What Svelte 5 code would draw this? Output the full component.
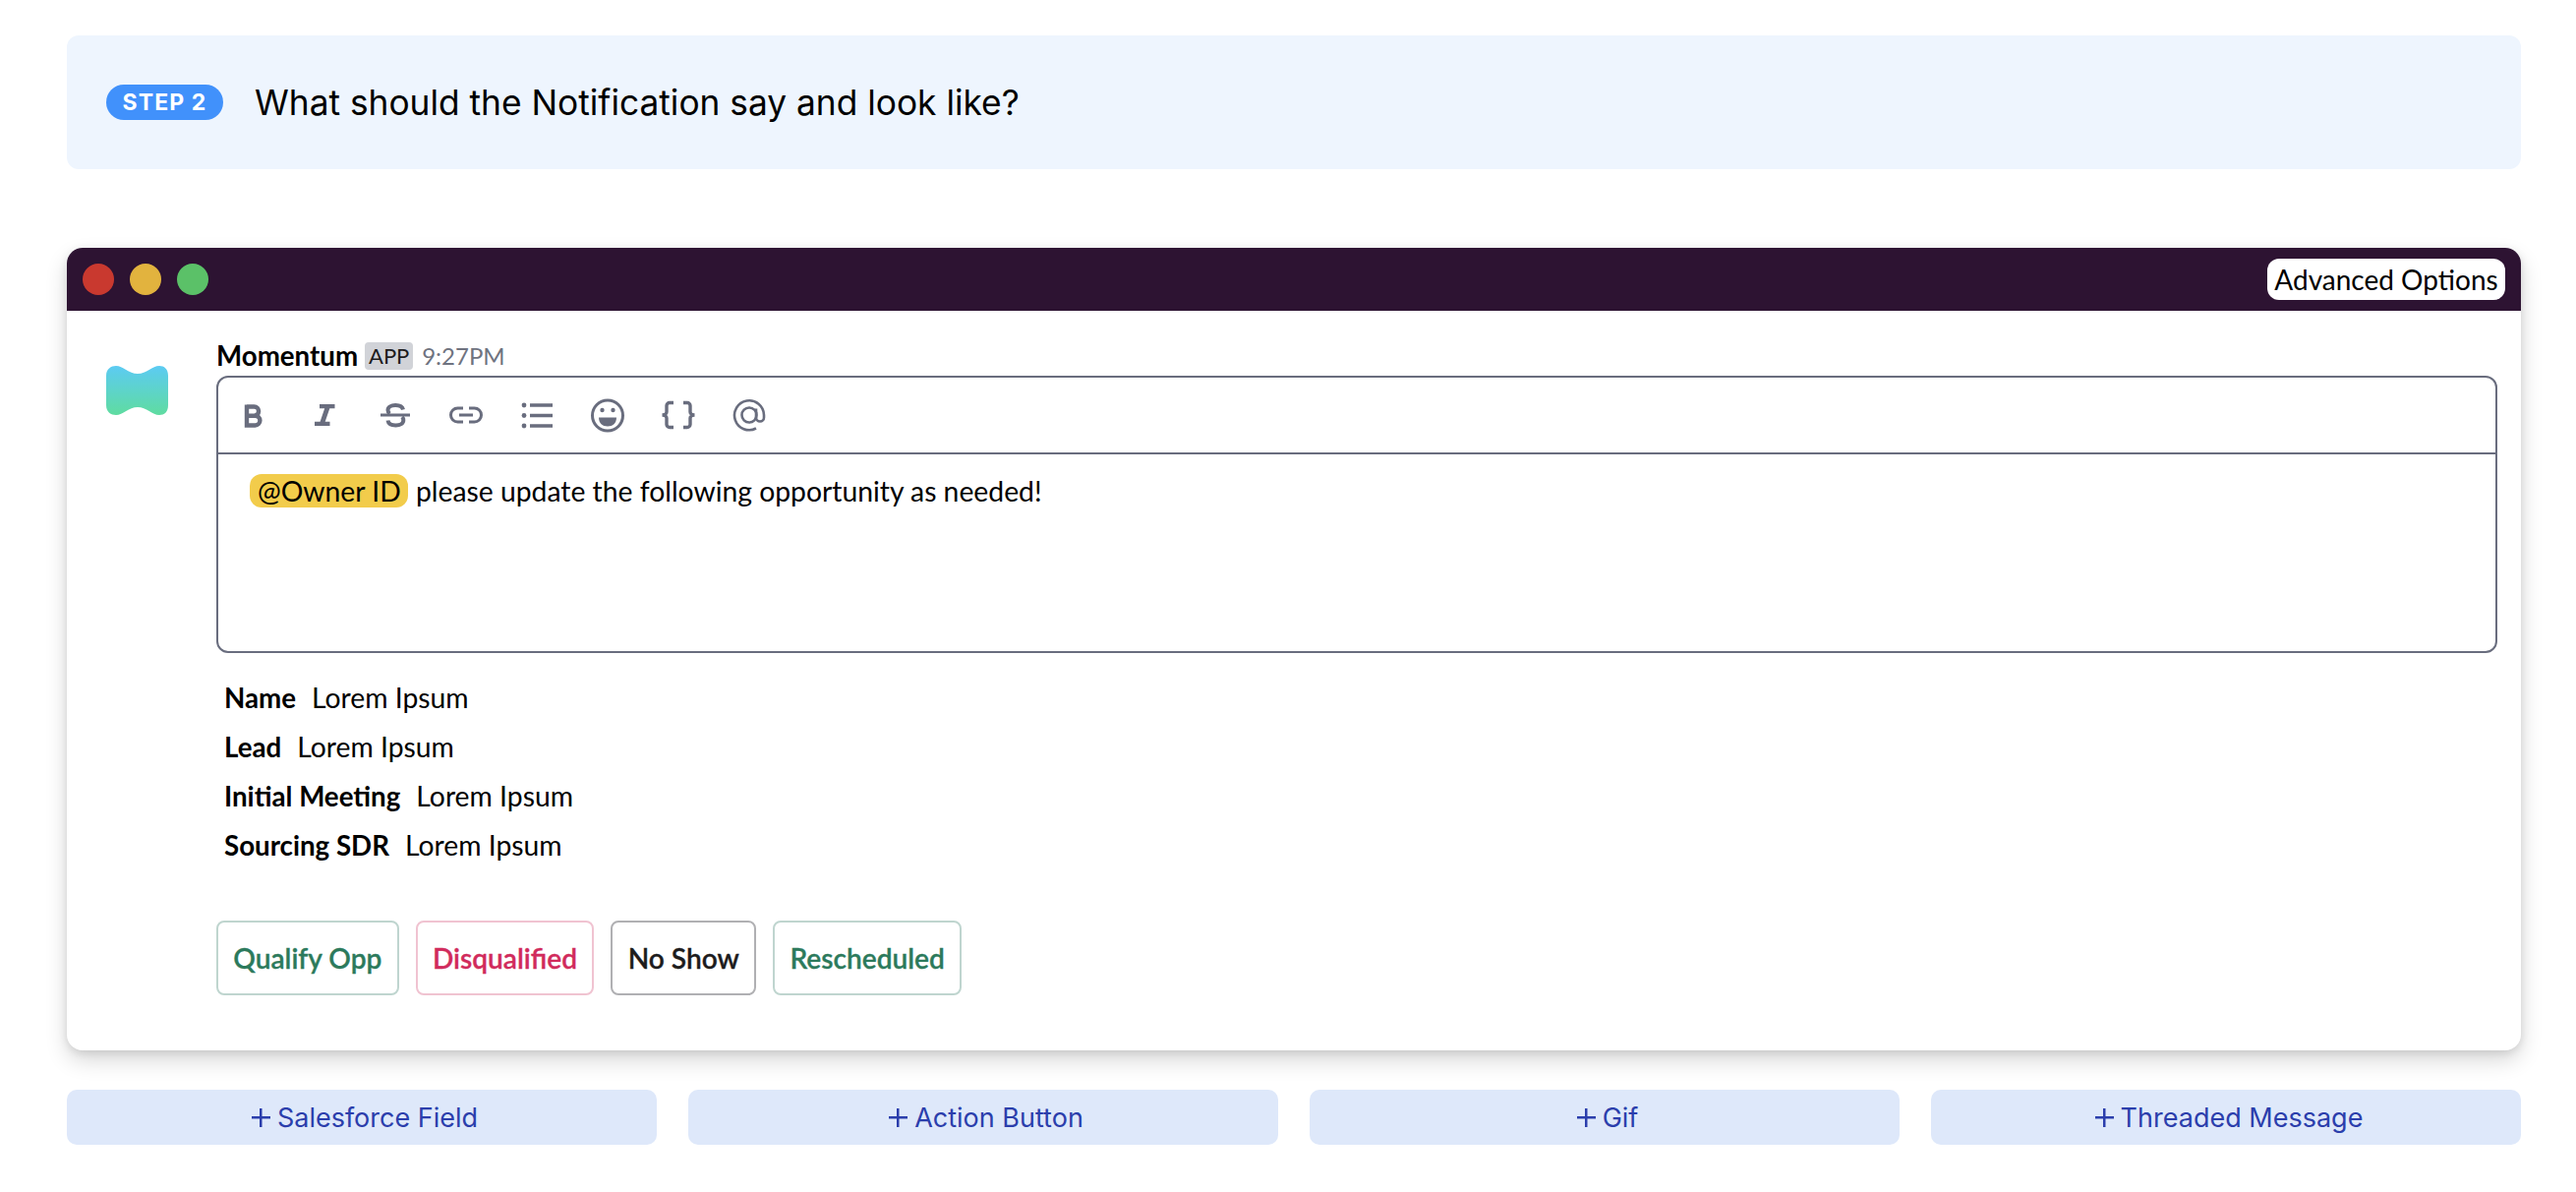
<script lang="ts">
  const fields = [
    { label: 'Name', value: 'Lorem Ipsum' },
    { label: 'Lead', value: 'Lorem Ipsum' },
    { label: 'Initial Meeting', value: 'Lorem Ipsum' },
    { label: 'Sourcing SDR', value: 'Lorem Ipsum' }
  ];
  const actions = [
    { label: 'Qualify Opp', kind: 'green' },
    { label: 'Disqualified', kind: 'red' },
    { label: 'No Show', kind: 'plain' },
    { label: 'Rescheduled', kind: 'green' }
  ];
  const adds = ['Salesforce Field', 'Action Button', 'Gif', 'Threaded Message'];
</script>

<main class="page">
  <header class="step">
    <span class="pill">STEP 2</span>
    <h2 class="title">What should the Notification say and look like?</h2>
  </header>

  <section class="window">
    <div class="bar">
      <span class="dot red"></span>
      <span class="dot yellow"></span>
      <span class="dot green"></span>
      <button class="advanced">Advanced Options</button>
    </div>

    <div class="body">
      <svg class="logo" width="64" height="52" viewBox="0 0 64 52" aria-hidden="true">
        <defs>
          <linearGradient id="lg" x1="0" y1="0" x2="0" y2="1">
            <stop offset="0" stop-color="#5ccbf3" />
            <stop offset="1" stop-color="#5fdca0" />
          </linearGradient>
        </defs>
        <path fill="url(#lg)" d="M0 11C0 4 5 1 10 1C17 1 23 9 32 9C41 9 47 1 54 1C59 1 63 4 63 11V41C63 48 59 51 54 51C47 51 41 43 32 43C23 43 17 51 10 51C5 51 0 48 0 41Z" />
      </svg>

      <div class="message">
        <div class="meta">
          <strong class="sender">Momentum</strong>
          <span class="tag">APP</span>
          <span class="time">9:27PM</span>
        </div>

        <div class="editor">
          <div class="toolbar">
            <span class="tool"><svg viewBox="0 0 40 40"><path class="s" stroke-width="4.400" d="M13 11.500h7.500a4.600 4.600 0 0 1 0 9.200H13M13 20.700h8.500a4.900 4.900 0 0 1 0 9.800H13zM13 9.500v21" /></svg></span>
            <span class="tool"><svg viewBox="0 0 40 40"><path class="f" d="M15 9h15.500v4.300h-5.200l-4.600 13.400h4.800V31H10v-4.300h5.600l4.600-13.400H15z" /></svg></span>
            <span class="tool"><svg viewBox="0 0 40 40"><path class="s" stroke-width="4" d="M28 14.500c-.6-3-3.800-4.500-7.800-4.500-4.500 0-7.700 1.900-7.700 5 0 1.500.6 2.700 2 3.600M12.500 25.500c.5 3.200 3.600 5 8 5 4.500 0 7.800-2 7.800-5.200 0-1.300-.4-2.400-1.400-3.300" /><path class="s" stroke-width="3" d="M5 20h30" /></svg></span>
            <span class="tool"><svg viewBox="0 0 40 40"><path class="s" stroke-width="3" d="M17 13h-5.500a7 7 0 0 0 0 14H17M23 13h5.500a7 7 0 0 1 0 14H23M13 20h14" /></svg></span>
            <span class="tool"><svg viewBox="0 0 40 40"><circle class="f" cx="7" cy="10" r="2.400" /><circle class="f" cx="7" cy="20.500" r="2.400" /><circle class="f" cx="7" cy="31" r="2.400" /><path class="s" stroke-width="3.400" d="M13 10h23M13 20.500h23M13 31h23" /></svg></span>
            <span class="tool"><svg viewBox="0 0 40 40"><circle class="s" stroke-width="3" cx="20" cy="20.500" r="15.500" /><circle class="f" cx="14.500" cy="15" r="2.200" /><circle class="f" cx="25.500" cy="15" r="2.200" /><path class="f" d="M11 22.500h18c0 6-3.800 9-9 9s-9-3-9-9z" /></svg></span>
            <span class="tool"><svg viewBox="0 0 40 40"><path class="s" stroke-width="3.400" d="M15 7.500h-4a3 3 0 0 0-3 3V17c0 1.800-2 3-4.500 3 2.500 0 4.500 1.200 4.500 3v6.500a3 3 0 0 0 3 3h4M25 7.500h4a3 3 0 0 1 3 3V17c0 1.800 2 3 4.500 3-2.500 0-4.500 1.200-4.500 3v6.500a3 3 0 0 1-3 3h-4" /></svg></span>
            <span class="tool"><svg viewBox="0 0 40 40"><path class="s" stroke-width="2.600" d="M27 33.500a15 15 0 1 1 8-13.500v2.500a4 4 0 0 1-8 0V13.500" /><circle class="s" stroke-width="2.600" cx="20" cy="20" r="7.500" /></svg></span>
          </div>
          <div class="compose">
            <span class="mention">@Owner ID</span>
            <span>please update the following opportunity as needed!</span>
          </div>
        </div>

        <ul class="fields">
          {#each fields as f}
            <li><b>{f.label}</b><span>{f.value}</span></li>
          {/each}
        </ul>

        <div class="actions">
          {#each actions as a}
            <button class="act {a.kind}">{a.label}</button>
          {/each}
        </div>
      </div>
    </div>
  </section>

  <div class="adds">
    {#each adds as a}
      <button class="add"><span class="plus"></span>{a}</button>
    {/each}
  </div>
</main>

<style>
  :global(body) { margin: 0; background: #fff; }
  .page { padding: 36px 56px 0 68px; box-sizing: border-box; width: 2620px; height: 1212px; overflow: hidden; }

  .step { height: 136px; background: #eef5fe; border-radius: 12px; display: flex; align-items: center; padding-left: 40px; box-sizing: border-box; gap: 32px; }
  .pill { width: 119px; height: 36px; border-radius: 18px; background: #4191fb; color: #fff; display: flex; align-items: center; justify-content: center; font: 700 23px/1 Inter, sans-serif; letter-spacing: 1.100px; }
  .title { margin: 2px 0 0; font: 400 35.300px/44px Inter, sans-serif; color: #000; }

  .window { margin-top: 80px; height: 816px; border-radius: 16px; background: #fff; box-shadow: 0 10px 22px rgba(0,0,0,.16), 0 2px 8px rgba(0,0,0,.1); overflow: hidden; }
  .bar { height: 64px; background: #2d1332; display: flex; align-items: center; padding: 0 16px; gap: 16px; }
  .dot { width: 32px; height: 32px; border-radius: 50%; }
  .dot.red { background: #c9392f; }
  .dot.yellow { background: #e2b33e; }
  .dot.green { background: #5bc168; }
  .advanced { margin-left: auto; height: 42px; width: 242px; padding: 0; border: 0; border-radius: 12px; background: #fff; color: #000; font: 400 28px/42px Lato, sans-serif; white-space: nowrap; }

  .body { display: flex; padding: 29px 24px 0 40px; font-family: Lato, sans-serif; }
  .logo { margin-top: 26px; flex: none; }
  .message { margin-left: 48px; flex: 1; min-width: 0; }

  .meta { display: flex; align-items: center; height: 37px; padding-bottom: 3px; box-sizing: border-box; }
  .sender { font: 700 27.700px/34px Lato, sans-serif; color: #000; }
  .tag { margin-left: 7px; width: 49px; height: 28px; background: #d1d3d8; border-radius: 4px; font: 400 22px/28px Lato, sans-serif; color: #1d1c1d; text-align: center; }
  .time { margin-left: 9px; font: 400 24px/28px Lato, sans-serif; color: #6f7380; }

  .editor { height: 282px; border: 2px solid #696d7e; border-radius: 12px; box-sizing: border-box; }
  .toolbar { height: 78px; box-sizing: border-box; border-bottom: 2px solid #696d7e; display: flex; align-items: center; }
  .tool { width: 72px; display: flex; justify-content: center; }
  .tool svg { width: 40px; height: 40px; display: block; overflow: visible; }
  .s { fill: none; stroke: #696d7e; stroke-linecap: butt; }
  .f { fill: #696d7e; }

  .compose { padding: 20px 0 0 32px; font: 400 28.300px/34px Lato, sans-serif; color: #000; display: flex; gap: 8px; }
  .mention { background: #f2cc4b; border-radius: 12px; padding: 0 8px; width: 161px; box-sizing: border-box; text-align: center; white-space: nowrap; }

  .fields { list-style: none; margin: 20px 0 0; padding: 0 0 0 8px; }
  .fields li { height: 50px; display: flex; align-items: baseline; gap: 16px; font: 400 28.300px/50px Lato, sans-serif; color: #000; }
  .fields b { font-weight: 700; font-size: 27.700px; }

  .actions { display: flex; gap: 17px; margin-top: 52px; }
  .act { height: 76px; padding: 0 15.300px; border-radius: 8px; background: #fff; font: 600 28.100px/1 Lato, sans-serif; -webkit-text-stroke: .3px currentColor; border: 2px solid; box-sizing: border-box; }
  .act.green { color: #2c7a5c; border-color: #bfd5cf; }
  .act.red { color: #d12b5c; border-color: #f0c3d1; }
  .act.plain { color: #1d1c1d; border-color: #b0b0b3; }

  .adds { margin-top: 40px; display: grid; grid-template-columns: repeat(4, 600px); gap: 32px; }
  .add { height: 56px; padding: 0 0 0 6px; border: 0; border-radius: 10px; background: #dee8fa; color: #2b3eac; font: 400 27px/1 Inter, sans-serif; display: flex; align-items: center; justify-content: center; gap: 7px; }
  .plus { width: 19px; height: 19px; background: linear-gradient(currentColor, currentColor) center / 100% 2.500px no-repeat, linear-gradient(currentColor, currentColor) center / 2.500px 100% no-repeat; }
</style>
